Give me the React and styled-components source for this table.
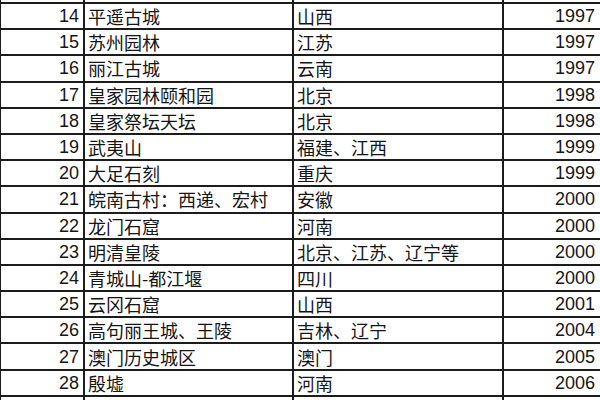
import React from "react";
import styled, { createGlobalStyle } from "styled-components";

const Global = createGlobalStyle`
  html, body { margin: 0; padding: 0; background: #fff; overflow: hidden; }
  body { width: 600px; height: 400px; }
`;

const Sheet = styled.div`
  display: grid;
  grid-template-columns: 82px 207px 208px 110px;
  grid-auto-rows: 24.2px;
  gap: 2px;
  padding-left: 1px;
  background: #1c1c1c;
  margin-top: -22.2px;
  width: 620px;
  font-family: "Noto Sans CJK SC", "Liberation Sans", sans-serif;
  color: #151515;
`;

const Cell = styled.div`
  background: #fff;
  display: flex;
  align-items: center;
  justify-content: ${(p) => (p.$right ? "flex-end" : "flex-start")};
  padding: ${(p) => (p.$right ? "0 4px 0 0" : "0 0 0 3px")};
  font-size: 18px;
  line-height: 1;
  white-space: nowrap;
  overflow: hidden;
`;

const Num = styled(Cell)`
  font-family: "Liberation Sans", Arial, sans-serif;
  font-size: 18px;
`;

const Year = styled(Num)`
  padding-right: 19px;
`;

const rows = [
  [14, "平遥古城", "山西", 1997],
  [15, "苏州园林", "江苏", 1997],
  [16, "丽江古城", "云南", 1997],
  [17, "皇家园林颐和园", "北京", 1998],
  [18, "皇家祭坛天坛", "北京", 1998],
  [19, "武夷山", "福建、江西", 1999],
  [20, "大足石刻", "重庆", 1999],
  [21, "皖南古村：西递、宏村", "安徽", 2000],
  [22, "龙门石窟", "河南", 2000],
  [23, "明清皇陵", "北京、江苏、辽宁等", 2000],
  [24, "青城山-都江堰", "四川", 2000],
  [25, "云冈石窟", "山西", 2001],
  [26, "高句丽王城、王陵", "吉林、辽宁", 2004],
  [27, "澳门历史城区", "澳门", 2005],
  [28, "殷墟", "河南", 2006],
];

export default function App() {
  return (
    <>
      <Global />
      <Sheet>
        <Num $right />
        <Cell />
        <Cell />
        <Year $right />
        {rows.map(([n, name, prov, year]) => (
          <React.Fragment key={n}>
            <Num $right>{n}</Num>
            <Cell>{name}</Cell>
            <Cell>{prov}</Cell>
            <Year $right>{year}</Year>
          </React.Fragment>
        ))}
        <Num $right />
        <Cell />
        <Cell />
        <Year $right />
      </Sheet>
    </>
  );
}
